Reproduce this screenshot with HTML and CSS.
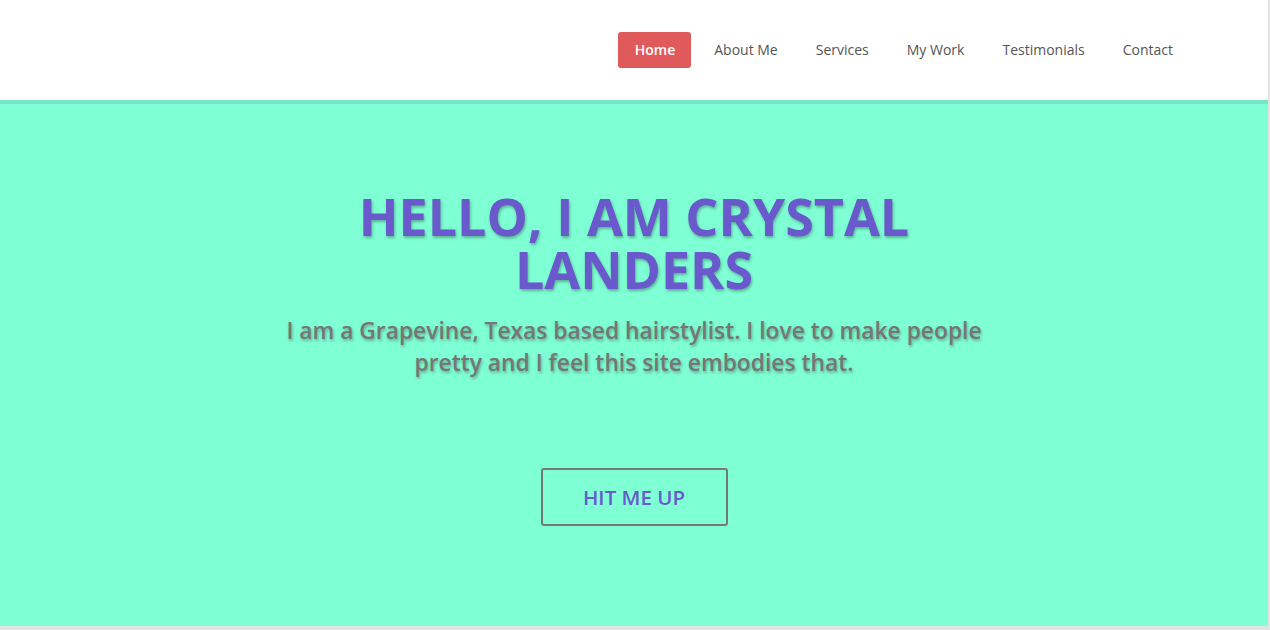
FILE: index.html
```html
<!DOCTYPE html>
<html lang="en">
<head>
<meta charset="utf-8">
<title>Crystal Landers</title>
<link rel="stylesheet" href="styles.css">
</head>
<body>
<div class="page">
  <header class="site-header">
    <nav class="nav">
      <a class="nav-link active" href="#">Home</a>
      <a class="nav-link" href="#">About Me</a>
      <a class="nav-link" href="#">Services</a>
      <a class="nav-link" href="#">My Work</a>
      <a class="nav-link" href="#">Testimonials</a>
      <a class="nav-link" href="#">Contact</a>
    </nav>
  </header>
  <section class="hero">
    <h1 class="hero-title">Hello, I am Crystal Landers</h1>
    <p class="hero-text">I am a Grapevine, Texas based hairstylist. I love to make people pretty and I feel this site embodies that.</p>
    <a class="hero-btn" href="#">HIT ME UP</a>
  </section>
</div>
</body>
</html>
```

FILE: styles.css
```css
html, body {
  margin: 0;
  padding: 0;
}
body {
  background: #e3e3e3;
  font-family: "Open Sans", "Liberation Sans", sans-serif;
  width: 1270px;
  height: 630px;
  overflow: hidden;
}
.page {
  width: 1268px;
  background: #ffffff;
}
.site-header {
  height: 100px;
  background: #ffffff;
  border-bottom: 4px solid #76e6c6;
  display: flex;
  justify-content: flex-end;
  align-items: flex-start;
  padding-right: 79px;
  box-sizing: content-box;
}
.nav {
  display: flex;
  gap: 6px;
  margin-top: 32px;
}
.nav-link {
  display: block;
  height: 36px;
  line-height: 36px;
  padding: 0 16px;
  font-size: 14px;
  color: #555555;
  text-decoration: none;
  border-radius: 3px;
}
.nav-link.active {
  background: #e05a5b;
  color: #ffffff;
  font-weight: 600;
  padding: 0 16px 0 17px;
  margin-right: 1px;
}
.hero {
  height: 522px;
  background: #7fffd4;
  display: flex;
  flex-direction: column;
  align-items: center;
  box-sizing: border-box;
  padding-top: 85px;
}
.hero-title {
  margin: 0;
  width: 620px;
  text-align: center;
  font-size: 52px;
  line-height: 53px;
  font-weight: 700;
  text-transform: uppercase;
  color: #6a58cd;
  text-shadow: 1px 2px 3px rgba(0, 0, 0, 0.3);
}
.hero-text {
  margin: 20px 0 0;
  width: 720px;
  text-align: center;
  font-size: 22.8px;
  line-height: 32px;
  font-weight: 600;
  color: #767676;
  text-shadow: 1px 2px 3px rgba(0, 0, 0, 0.3);
}
.hero-btn {
  margin-top: 89px;
  width: 187px;
  height: 58px;
  box-sizing: border-box;
  border: 2px solid #777777;
  border-radius: 3px;
  display: flex;
  align-items: center;
  justify-content: center;
  font-size: 20.5px;
  font-weight: 600;
  color: #6a58cd;
  text-decoration: none;
}
```
